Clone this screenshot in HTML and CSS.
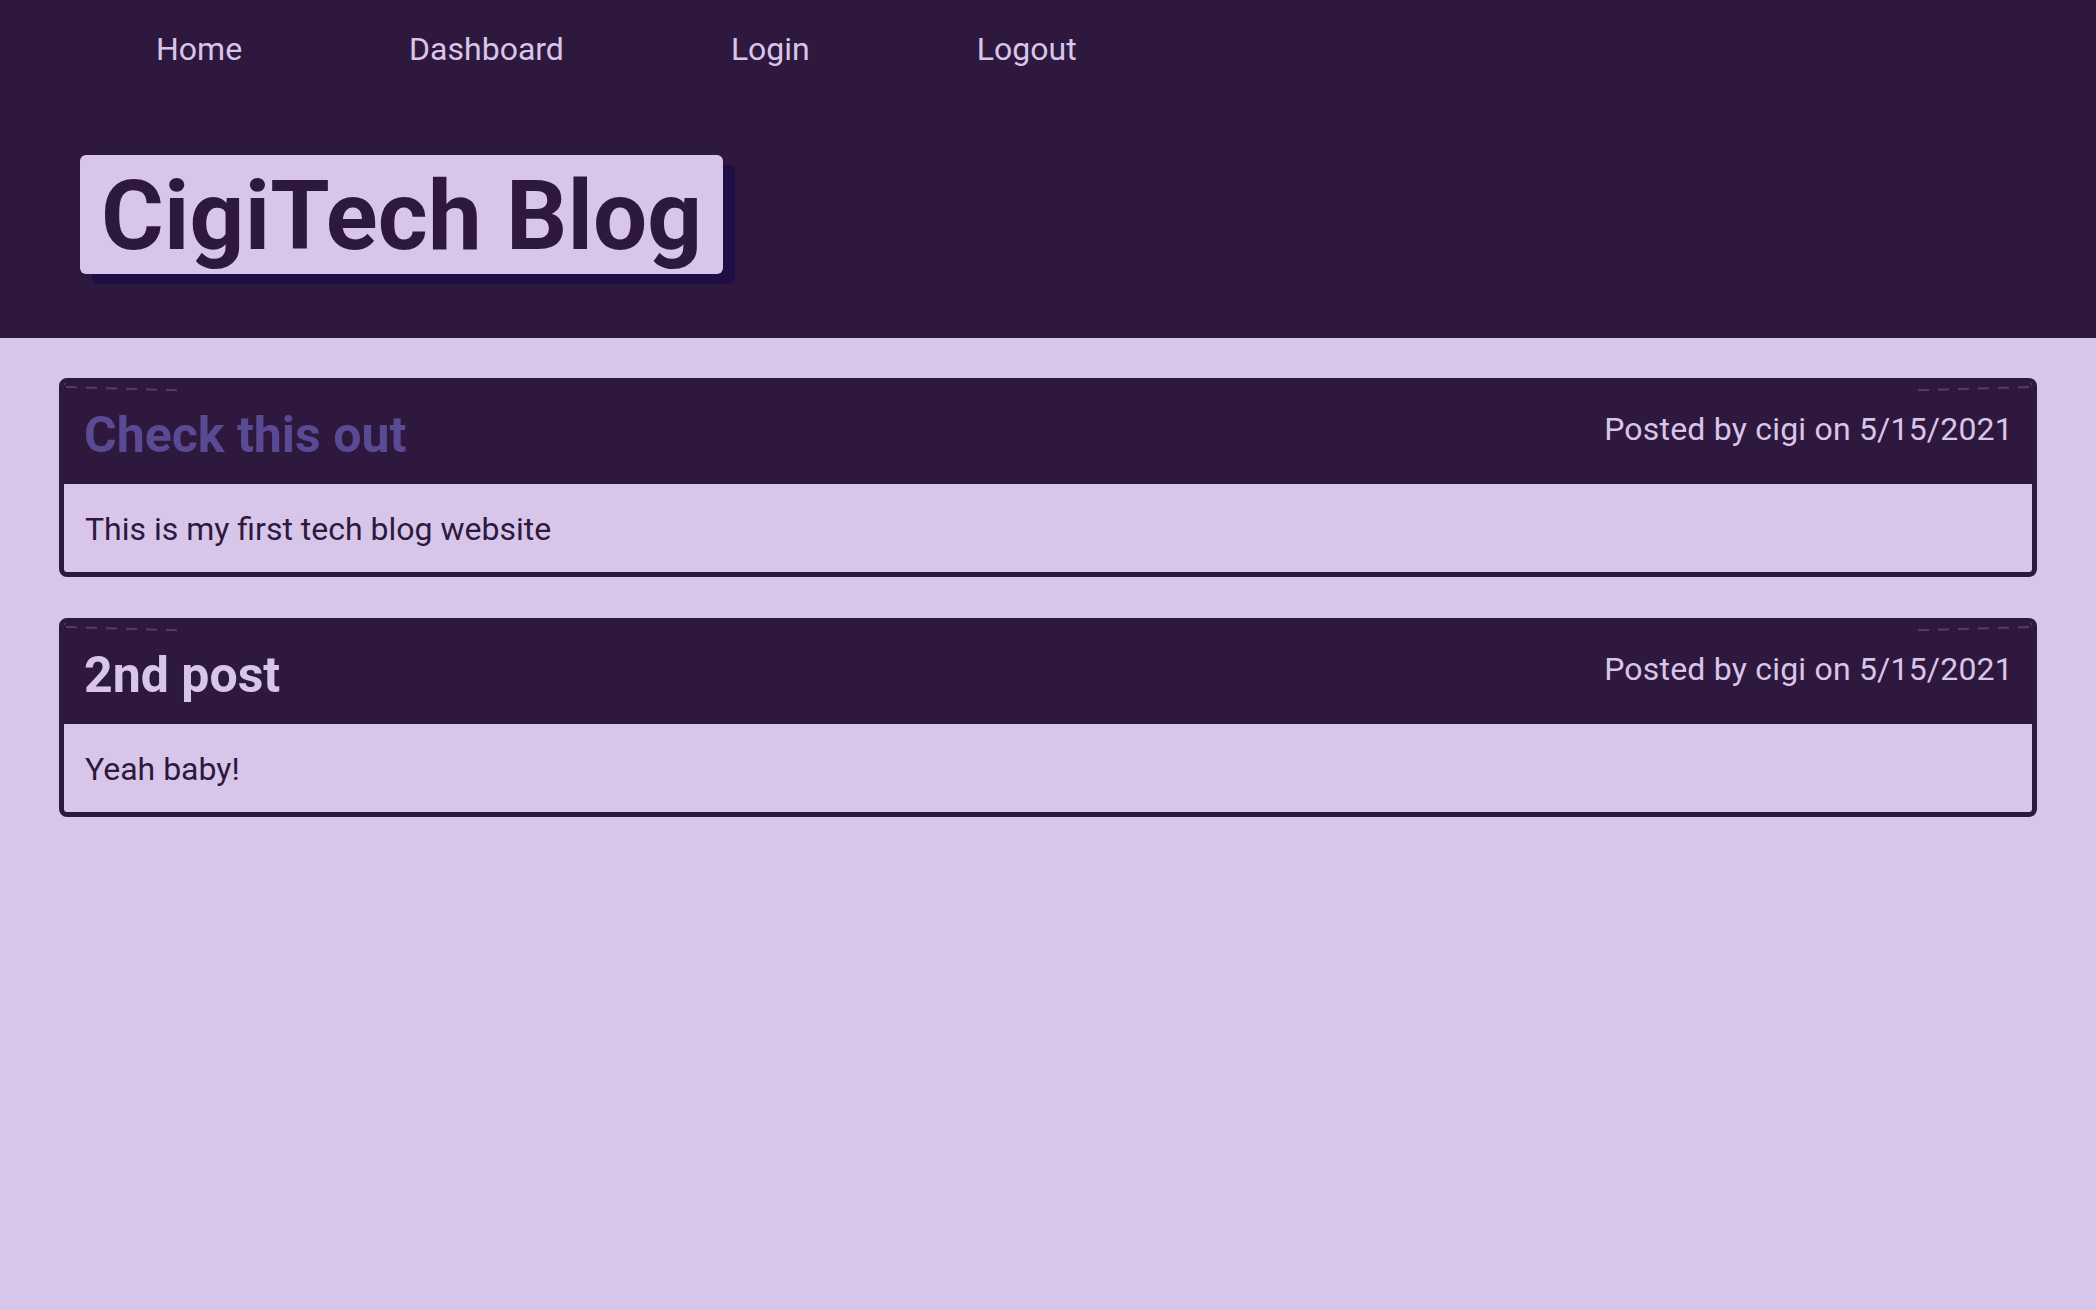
FILE: index.html
```html
<!DOCTYPE html>
<html lang="en">
<head>
<meta charset="utf-8">
<title>CigiTech Blog</title>
<link rel="stylesheet" href="styles.css">
</head>
<body>
<header class="site-header">
  <nav class="nav">
    <a class="nav-link" href="#">Home</a>
    <a class="nav-link" href="#">Dashboard</a>
    <a class="nav-link" href="#">Login</a>
    <a class="nav-link" href="#">Logout</a>
  </nav>
  <h1 class="brand">CigiTech Blog</h1>
</header>
<main class="posts">
  <article class="post">
    <div class="post-head">
      <h2 class="post-title"><a class="post-link visited" href="#">Check this out</a></h2>
      <p class="post-meta">Posted by cigi on 5/15/2021</p>
    </div>
    <div class="post-body">
      <p class="post-text">This is my first tech blog website</p>
    </div>
  </article>
  <article class="post">
    <div class="post-head">
      <h2 class="post-title"><a class="post-link" href="#">2nd post</a></h2>
      <p class="post-meta">Posted by cigi on 5/15/2021</p>
    </div>
    <div class="post-body">
      <p class="post-text">Yeah baby!</p>
    </div>
  </article>
</main>
</body>
</html>
```
FILE: styles.css
```css
* { box-sizing: border-box; }

html, body {
  margin: 0;
  padding: 0;
}

body {
  background: #d8c6ea;
  font-family: Roboto, "Noto Sans", "Liberation Sans", sans-serif;
  color: #2f183d;
  min-height: 1310px;
}

.site-header {
  background: #2f183d;
  height: 338px;
  padding-top: 30px;
}

.nav {
  display: flex;
  gap: 167px;
  padding-left: 156px;
}

.nav-link {
  color: #d8c6ea;
  text-decoration: none;
  font-size: 32px;
  line-height: 38px;
}

.brand {
  display: inline-block;
  margin: 87px 0 0 80px;
  height: 119px;
  padding: 0 21px;
  background: #d8c6ea;
  color: #2f183d;
  border-radius: 6px;
  box-shadow: 12px 10px 0 #1e0e45;
  font-size: 96px;
  font-weight: 700;
  line-height: 123px;
  letter-spacing: 0.2px;
  white-space: nowrap;
}

.posts {
  padding: 40px 59px;
  display: flex;
  flex-direction: column;
  gap: 41px;
}

.post {
  border: 5px solid #2f183d;
  border-radius: 8px;
  overflow: hidden;
  background: #d8c6ea;
}

.post-head {
  position: relative;
  background: #2f183d;
  display: flex;
  justify-content: space-between;
  align-items: flex-start;
  padding: 22px 19px 19px 20px;
}

.post-head::before,
.post-head::after {
  content: "";
  position: absolute;
  top: 3px;
  height: 2px;
  width: 112px;
  background: repeating-linear-gradient(90deg, rgba(216,198,234,0.22) 0 11px, transparent 11px 20px);
}

.post-head::before {
  left: 2px;
  transform: rotate(1.6deg);
  transform-origin: left center;
}

.post-head::after {
  right: 2px;
  transform: rotate(-1.6deg);
  transform-origin: right center;
}

.post-title {
  margin: 0;
  font-size: 50px;
  font-weight: 700;
  line-height: 60px;
}

.post-link {
  color: #d8c6ea;
  text-decoration: none;
}

.post-link.visited {
  color: #5a4a94;
}

.post-meta {
  margin: 5px 0 0;
  color: #d8c6ea;
  font-size: 32px;
  line-height: 38px;
  letter-spacing: 0.2px;
}

.post-body {
  padding: 26px 21px 24px;
}

.post-text {
  margin: 0;
  font-size: 32px;
  line-height: 38px;
  color: #2f183d;
}
```
